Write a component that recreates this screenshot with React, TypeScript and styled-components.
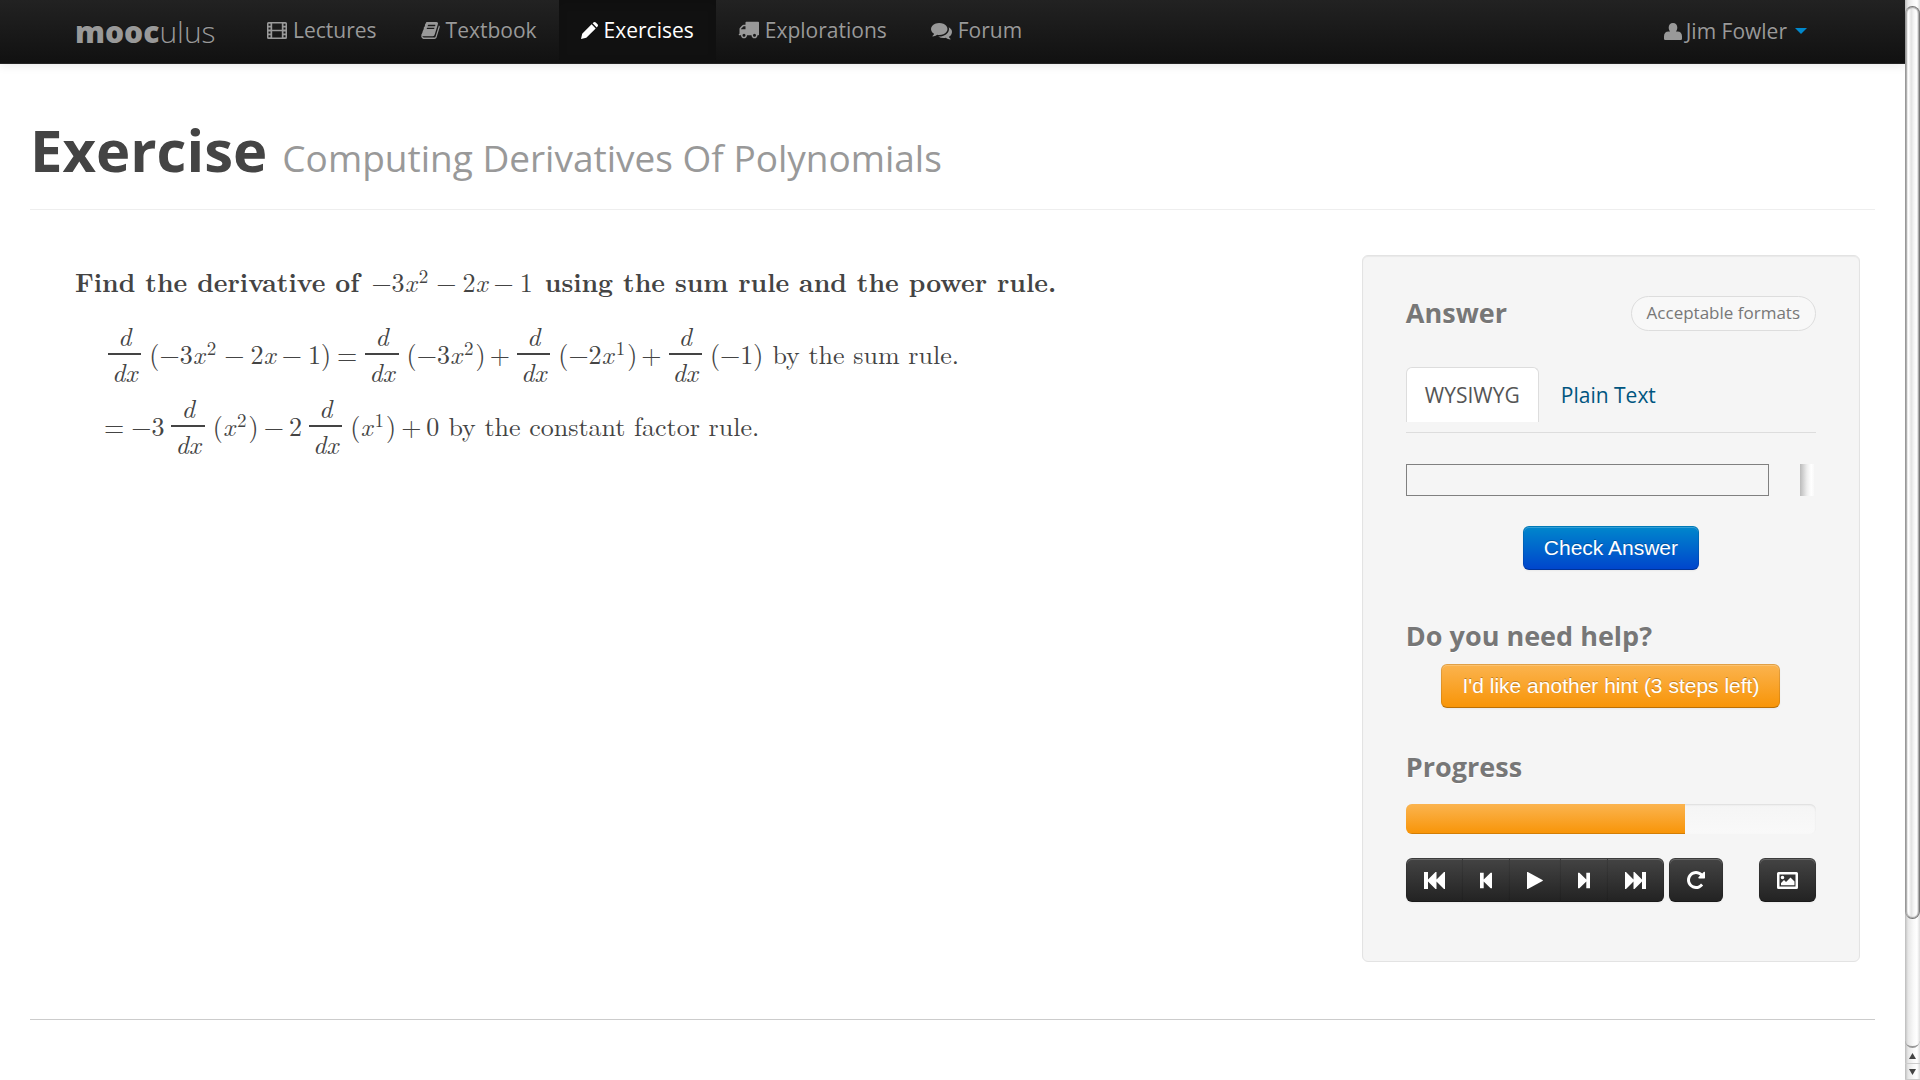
import React from "react";
import styled, { createGlobalStyle, css } from "styled-components";

const SANS = '"Open Sans", "Noto Sans", sans-serif';
const HELV = '"Liberation Sans", Arial, sans-serif';
const ROMAN = '"Latin Modern Roman", "Liberation Serif", serif';

const GlobalStyle = createGlobalStyle`
  * { box-sizing: border-box; }
  body {
    margin: 0;
    background: #fff;
    color: #444;
    font: 21px/30px ${SANS};
  }
  a { text-decoration: none; }
  h1, h2, p { margin: 0; }
`;

const Shell = styled.div`
  display: flex;
  height: 100vh;
  overflow: hidden;
`;

const Page = styled.div`
  flex: 1;
  min-width: 0;
`;

/* ---------- navigation bar ---------- */

const NavBar = styled.header`
  display: flex;
  align-items: flex-start;
  height: 64px;
  padding: 0 98px 0 75px;
  background: linear-gradient(#222, #111);
  border-bottom: 1px solid #252525;
  box-shadow: 0 1px 10px rgba(0, 0, 0, 0.1);
  text-shadow: 0 -1px 0 rgba(0, 0, 0, 0.25);
`;

const Brand = styled.a`
  width: 170px;
  padding-top: 12px;
  font-size: 30px;
  line-height: 40px;
  font-weight: 300;
  color: #999;

  b { font-weight: 800; }
`;

const NavLinks = styled.nav`
  display: flex;
  flex: 1;
`;

const NavLink = styled.a<{ $active?: boolean }>`
  display: flex;
  align-items: center;
  gap: 6px;
  height: 60px;
  padding: 0 22px;
  color: #999;
  ${(p) =>
    p.$active &&
    css`
      color: #fff;
      background: #111;
      box-shadow: inset 0 3px 8px rgba(0, 0, 0, 0.125);
    `}
`;

const UserMenu = styled.button`
  display: flex;
  align-items: center;
  gap: 4px;
  height: 62px;
  padding: 0;
  border: 0;
  background: none;
  color: #999;
  font: inherit;
  text-shadow: inherit;
`;

const Caret = styled.i`
  margin-left: 4px;
  border: 6px solid transparent;
  border-top-color: #08c;
  border-bottom: 0;
`;

/* ---------- page body ---------- */

const Container = styled.div`
  padding: 0 30px;
`;

const PageHeader = styled.div`
  padding: 50px 0 15px;
  margin-bottom: 45px;
  border-bottom: 1px solid #eee;
`;

const Title = styled.h1`
  font-size: 58px;
  line-height: 72px;
  font-weight: 700;

  small {
    font-size: 37px;
    font-weight: 400;
    color: #999;
  }
`;

const Columns = styled.div`
  display: flex;
  align-items: flex-start;
`;

const Problem = styled.main`
  flex: 1;
  padding: 9px 0 0 45px;
  font: 26px/36px ${ROMAN};
`;

const Line = styled.p<{ $indent?: boolean; $bold?: boolean }>`
  display: flex;
  align-items: center;
  ${(p) =>
    p.$indent
      ? css`
          height: 72px;
          padding-left: 29px;
        `
      : css`
          margin-bottom: 18px;
        `}
  font-weight: ${(p) => (p.$bold ? 700 : 400)};
`;

const MathText = styled.span<{ $spaced?: boolean }>`
  margin: 0 ${(p) => (p.$spaced ? 12 : 0)}px;
  font-weight: 400;
  white-space: nowrap;

  sup {
    margin: 0 2px;
    font-size: 19px;
    line-height: 0;
    vertical-align: 9px;
  }
`;

const Reason = styled.span`
  margin-left: 9px;
`;

const Op = styled.span<{ $gap: number; $after?: number }>`
  margin: 0 ${(p) => p.$after ?? p.$gap}px 0 ${(p) => p.$gap}px;
`;

const FractionBox = styled.span`
  display: inline-flex;
  flex-direction: column;
  margin: 0 8px 0 4px;
  text-align: center;
  line-height: 34px;
  font-style: italic;

  span + span { border-top: 2px solid #444; }
  span { padding: 0 4px; }
`;

/* ---------- answer panel ---------- */

const Well = styled.aside`
  flex: 0 0 27%;
  min-width: 480px;
  margin-right: 15px;
  padding: 39px 43px 59px;
  background: #f5f5f5;
  border: 1px solid #e3e3e3;
  border-radius: 6px;
  box-shadow: inset 0 1px 1px rgba(0, 0, 0, 0.05);
`;

const WellHead = styled.div`
  display: flex;
  align-items: center;
  justify-content: space-between;
  height: 36px;
  margin-bottom: 36px;
`;

const Heading = styled.h2`
  font-size: 27px;
  line-height: 36px;
  font-weight: 700;
  color: #777;
  text-shadow: 0 1px 0 #fff;
`;

const Pill = styled.button`
  height: 35px;
  padding: 0 15px;
  border: 1px solid #ddd;
  border-radius: 18px;
  background: #f8f8f8;
  color: #777;
  font: 17px/32px ${SANS};
`;

const Tabs = styled.div`
  display: flex;
  padding-bottom: 10px;
  margin-bottom: 31px;
  border-bottom: 1px solid #ddd;
`;

const Tab = styled.a<{ $active?: boolean }>`
  height: 55px;
  margin-right: 3px;
  padding: 12px 18px;
  border: 1px solid transparent;
  border-bottom: 0;
  border-radius: 6px 6px 0 0;
  color: #005580;
  ${(p) =>
    p.$active &&
    css`
      color: #555;
      background: #fff;
      border-color: #ddd;
    `}
`;

const FieldRow = styled.div`
  display: flex;
  justify-content: space-between;
  padding-right: 2px;
  margin-bottom: 30px;
`;

const MathField = styled.input`
  flex: 1;
  min-width: 0;
  height: 32px;
  margin-right: 31px;
  border: 1px solid #808080;
  background: transparent;
  font: 21px ${ROMAN};
`;

const FieldEdge = styled.span`
  width: 14px;
  height: 32px;
  background: linear-gradient(90deg, #bbb, #eee 50%, #fff 80%, #f8f8f8);
`;

const Center = styled.div<{ $above?: number; $below: number }>`
  display: flex;
  justify-content: center;
  margin: ${(p) => p.$above ?? 0}px 0 ${(p) => p.$below}px;
`;

const buttonBase = css`
  height: 44px;
  color: #fff;
  border: 1px solid;
  border-color: rgba(0, 0, 0, 0.1) rgba(0, 0, 0, 0.1) rgba(0, 0, 0, 0.25);
  background-origin: border-box;
  box-shadow: inset 0 1px 0 rgba(255, 255, 255, 0.2), 0 1px 2px rgba(0, 0, 0, 0.05);
`;

const Button = styled.button<{ $tone: "primary" | "warning" }>`
  ${buttonBase}
  padding: 0 20px;
  border-radius: 6px;
  font: 21px/30px ${HELV};
  text-shadow: 0 -1px 0 rgba(0, 0, 0, 0.25);
  background-image: ${(p) =>
    p.$tone === "primary" ? "linear-gradient(#08c, #04c)" : "linear-gradient(#fbb450, #f89406)"};
`;

const Track = styled.div`
  height: 30px;
  margin: 19px 0 24px;
  border-radius: 6px;
  overflow: hidden;
  background: linear-gradient(#f5f5f5, #f9f9f9);
  box-shadow: inset 0 1px 2px rgba(0, 0, 0, 0.1);
`;

const Fill = styled.div`
  height: 100%;
  background: linear-gradient(#fbb450, #f89406);
  box-shadow: inset 0 -1px 0 rgba(0, 0, 0, 0.15);
`;

const Player = styled.div`
  display: flex;
  gap: 5px;
`;

const Group = styled.div`
  display: flex;

  button { border-radius: 0; border-right-width: 0; }
  button:first-child { border-radius: 6px 0 0 6px; }
  button:last-child { border-radius: 0 6px 6px 0; border-right-width: 1px; }
`;

const DarkButton = styled.button<{ $right?: boolean }>`
  ${buttonBase}
  display: flex;
  align-items: center;
  padding: 0 17px;
  border-radius: 6px;
  background-image: linear-gradient(#444, #222);
  ${(p) => p.$right && css`margin-left: auto;`}
`;

const Rule = styled.hr`
  margin: 57px 0 0;
  border: 0;
  border-top: 1px solid #ccc;
`;

/* ---------- window scroll bar ---------- */

const ScrollBar = styled.div`
  display: flex;
  flex-direction: column;
  width: 15px;
  padding-top: 6px;
  background: linear-gradient(90deg, #bbb, #e6e6e6 20%, #fafafa 60%, #fff 80%, #ddd);
`;

const Thumb = styled.div`
  flex: 0 0 85%;
  border: 1px solid #777;
  border-left-color: #999;
  border-radius: 8px;
  background: linear-gradient(90deg, #ddd, #fff 20%, #e2e2e2 40%, #f4f4f4 60%, #fff 80%, #ccc);
  box-shadow: inset 0 0 1px 1px #aaa;
`;

const TrackEnd = styled.div`
  flex: 1;
  border-bottom: 2px solid #999;
  border-radius: 0 0 8px 8px;
`;

const Arrow = styled.div`
  display: flex;
  align-items: center;
  justify-content: center;
  height: 16px;
  border-bottom: 1px solid #ccc;
`;

/* ---------- icons ---------- */

type IconProps = { w: number; h: number; box?: string; d: string };

const Icon = ({ w, h, box, d }: IconProps) => (
  <svg width={w} height={h} viewBox={box ?? `0 0 ${w} ${h}`} fill="currentColor" aria-hidden="true">
    <path fillRule="evenodd" d={d} />
  </svg>
);

const FILM =
  "M1.5 0h17A1.5 1.5 0 0 1 20 1.5v14a1.5 1.5 0 0 1-1.5 1.5h-17A1.5 1.5 0 0 1 0 15.5v-14A1.5 1.5 0 0 1 1.5 0zM1.5 1.7v2h2v-2zM1.5 5.5v2h2v-2zM1.5 9.4v2h2v-2zM1.5 13.2v2h2v-2zM16.5 1.7v2h2v-2zM16.5 5.5v2h2v-2zM16.5 9.4v2h2v-2zM16.5 13.2v2h2v-2zM5.2 1.5v6.2h9.6V1.5zM5.2 9.3v6.2h9.6V9.3z";
const BOOK =
  "M1703 478q40 57 18 129l-275 906q-19 64-76.5 107.5t-122.5 43.5h-923q-77 0-148.5-53.5t-99.5-131.5q-24-67-2-127 0-4 3-27t4-37q1-8-3-21.5t-3-19.5q2-11 8-21t16.5-23.5 16.5-23.5q23-38 45-91.5t30-91.5q3-10 .5-30t-.5-28q3-11 17-28t17-23q21-36 42-92t25-90q1-9-2.5-32t.5-28q4-13 22-30.5t22-22.5q19-26 42.5-84.5t27.5-96.5q1-8-3-25.5t-2-26.5q2-8 9-18t18-23 17-21q8-12 16.5-30.5t15-35 16-36 19.5-32 26.5-23.5 36-11.5 47.5 5.5l-1 3q38-9 51-9h761q74 0 114 56t18 130l-274 906q-36 119-71.5 153.5t-128.5 34.5h-869q-27 0-38 15-11 16-1 43 24 70 144 70h923q29 0 56-15.5t35-41.5l300-987q7-22 5-57 38 15 59 43zm-1064 2q-4 13 2 22.5t20 9.5h608q13 0 25.5-9.5t16.5-22.5l21-64q4-13-2-22.5t-20-9.5h-608q-13 0-25.5 9.5t-16.5 22.5zm-83 256q-4 13 2 22.5t20 9.5h608q13 0 25.5-9.5t16.5-22.5l21-64q4-13-2-22.5t-20-9.5h-608q-13 0-25.5 9.5t-16.5 22.5z";
const PENCIL = "M0 17l1.2-5.3L10.6 2.3l4.1 4.1-9.4 9.4zM11.6 1.3l.8-.8q1.2-1 2.4 0l1.7 1.7q1 1.2 0 2.4l-.8.8z";
const TRUCK =
  "M640 1408q0-52-38-90t-90-38-90 38-38 90 38 90 90 38 90-38 38-90zm-384-512h384v-256h-158q-13 0-22 9l-195 195q-9 9-9 22v30zm1280 512q0-52-38-90t-90-38-90 38-38 90 38 90 90 38 90-38 38-90zm256-1088v1024q0 15-4 26.5t-13.5 18.5-16.5 11.5-23.5 6-22.5 2-25.5 0-22.5-.5q0 106-75 181t-181 75-181-75-75-181h-384q0 106-75 181t-181 75-181-75-75-181h-64q-3 0-22.5.5t-25.5 0-22.5-2-23.5-6-16.5-11.5-13.5-18.5-4-26.5q0-26 19-45t45-19v-320q0-8-.5-35t0-38 2.5-34.5 6.5-37 14-30.5 22.5-30l198-198q19-19 50.5-32t58.5-13h160v-192q0-26 19-45t45-19h1024q26 0 45 19t19 45z";
const COMMENTS =
  "M1408 768q0 139-94 257t-256.5 186.5-353.5 68.5q-86 0-176-16-124 88-278 128-36 9-86 16h-3q-11 0-20.5-8t-11.5-21q-1-3-1-6.5t.5-6.5 2-6l2.5-5 3.5-5.5 4-5 4.5-5 4-4.5q5-6 23-25t26-29.5 22.5-29 25-38.5 20.5-44q-124-72-195-177t-71-224q0-139 94-257t256.5-186.5 353.5-68.5 353.5 68.5 256.5 186.5 94 257zm384 256q0 120-71 224.5t-195 176.5q10 24 20.5 44t25 38.5 22.5 29 26 29.5 23 25q1 1 4 4.5t4.5 5 4 5 3.5 5.5l2.5 5 2 6 .5 6.5-1 6.5q-3 14-13 22t-22 7q-50-7-86-16-154-40-278-128-90 16-176 16-271 0-472-132 58 4 88 4 161 0 309-45t264-129q125-92 192-212t67-254q0-77-23-152 129 71 204 178t75 230z";
const USER =
  "M9 0c2.7 0 4.3 1.9 4.3 4.6 0 1.7-.6 3-1.4 4h1.6C16.3 8.6 18 10.5 18 13.2V15.8q0 1.2-1.2 1.2H1.2Q0 17 0 15.8V13.2C0 10.5 1.7 8.6 4.5 8.6h1.6c-.8-1-1.4-2.3-1.4-4C4.7 1.9 6.3 0 9 0z";
const FAST_BACK = "M0 0h4v7.5L11.5 0h1v7.5L20 0h1v17h-1L12.5 9.5V17h-1L4 9.5V17H0z";
const STEP_BACK = "M0 0h4v7.5L11.5 0h1.5v17h-1.5L4 9.5V17H0z";
const PLAY = "M0 .4Q0-.3.8.1L15.5 8q.8.5 0 1L.8 16.9Q0 17.3 0 16.6z";
const STEP_FWD = "M13 0H9v7.5L1.5 0H0v17h1.5L9 9.5V17h4z";
const FAST_FWD = "M21 0h-4v7.5L9.5 0h-1v7.5L1 0H0v17h1l7.500-7.500V17h1L17 9.500V17h4z";
const REPEAT =
  "M1664 256v448q0 26-19 45t-45 19h-448q-42 0-59-40-17-39 14-69l138-138q-148-137-349-137-104 0-198.5 40.5t-163.5 109.5-109.5 163.5-40.5 198.5 40.5 198.5 109.5 163.5 163.5 109.5 198.5 40.5q119 0 225-52t179-147q7-10 23-12 15 0 25 9l137 138q9 8 9.5 20.5t-7.5 22.5q-109 132-264 204.5t-327 72.5q-156 0-298-61t-245-164-164-245-61-298 61-298 164-245 245-164 298-61q147 0 284.5 55.5t244.5 156.5l130-129q29-31 70-14 39 17 39 59z";
const PICTURE =
  "M1.5 0h18A1.5 1.5 0 0 1 21 1.5v14a1.5 1.5 0 0 1-1.5 1.5h-18A1.5 1.5 0 0 1 0 15.5v-14A1.5 1.5 0 0 1 1.5 0zM2.5 2.5v12h16v-12zM5.5 3.7a1.8 1.8 0 1 1 0 3.6 1.8 1.8 0 0 1 0-3.6zM4 13.3v-2.3l3-3 2 2 4.5-4.5L17.5 9.5v3.8z";

const Fraction = () => (
  <FractionBox>
    <span>d</span>
    <span>dx</span>
  </FractionBox>
);

const X = ({ power }: { power?: number }) => (
  <>
    <i>x</i>
    {power && <sup>{power}</sup>}
  </>
);

const Polynomial = () => (
  <>
    −3<X power={2} /><Op $gap={6}>−</Op>2<X /><Op $gap={6}>−</Op>1
  </>
);

const navItems = [
  { label: "Lectures", icon: <Icon w={20} h={17} d={FILM} /> },
  { label: "Textbook", icon: <Icon w={19} h={21} box="40 0 1710 1792" d={BOOK} /> },
  { label: "Exercises", icon: <Icon w={17} h={17} d={PENCIL} />, active: true },
  { label: "Explorations", icon: <Icon w={21} h={21} box="0 100 1792 1792" d={TRUCK} /> },
  { label: "Forum", icon: <Icon w={21} h={21} box="0 0 1792 1792" d={COMMENTS} /> },
];

const transport = [
  { label: "First step", w: 21, d: FAST_BACK },
  { label: "Previous step", w: 12, box: "0 0 13 17", d: STEP_BACK },
  { label: "Play", w: 16, d: PLAY },
  { label: "Next step", w: 12, box: "0 0 13 17", d: STEP_FWD },
  { label: "Last step", w: 21, d: FAST_FWD },
];

const progress = 68;

export default function App() {
  return (
    <Shell>
      <GlobalStyle />
      <Page>
        <NavBar>
          <Brand href="#home"><b>mooc</b>ulus</Brand>
          <NavLinks>
            {navItems.map((n) => (
              <NavLink key={n.label} href={`#${n.label}`} $active={n.active}>
                {n.icon}
                {n.label}
              </NavLink>
            ))}
          </NavLinks>
          <UserMenu>
            <Icon w={18} h={17} d={USER} />
            Jim Fowler
            <Caret />
          </UserMenu>
        </NavBar>

        <Container>
          <PageHeader>
            <Title>
              Exercise <small>Computing Derivatives Of Polynomials</small>
            </Title>
          </PageHeader>

          <Columns>
            <Problem>
              <Line $bold>
                <span>Find the derivative of</span>
                <MathText $spaced><Polynomial /></MathText>
                <span>using the sum rule and the power rule.</span>
              </Line>
              <Line $indent>
                <Fraction />
                <MathText>(<Polynomial />)<Op $gap={6} $after={4}>=</Op></MathText>
                <Fraction />
                <MathText>(−3<X power={2} />)<Op $gap={4} $after={3}>+</Op></MathText>
                <Fraction />
                <MathText>(−2<X power={1} />)<Op $gap={4} $after={3}>+</Op></MathText>
                <Fraction />
                <MathText>(−1)</MathText>
                <Reason>by the sum rule.</Reason>
              </Line>
              <Line $indent>
                <MathText>=<Op $gap={7} $after={3}>−3</Op></MathText>
                <Fraction />
                <MathText>(<X power={2} />)<Op $gap={5}>−</Op><Op $gap={0} $after={3}>2</Op></MathText>
                <Fraction />
                <MathText>(<X power={1} />)<Op $gap={5}>+</Op>0</MathText>
                <Reason>by the constant factor rule.</Reason>
              </Line>
            </Problem>

            <Well>
              <WellHead>
                <Heading>Answer</Heading>
                <Pill>Acceptable formats</Pill>
              </WellHead>
              <Tabs>
                <Tab href="#wysiwyg" $active>WYSIWYG</Tab>
                <Tab href="#plain">Plain Text</Tab>
              </Tabs>
              <FieldRow>
                <MathField type="text" aria-label="Answer" />
                <FieldEdge />
              </FieldRow>
              <Center $below={48}>
                <Button $tone="primary">Check Answer</Button>
              </Center>
              <Heading>Do you need help?</Heading>
              <Center $above={10} $below={41}>
                <Button $tone="warning">I'd like another hint (3 steps left)</Button>
              </Center>
              <Heading>Progress</Heading>
              <Track role="progressbar" aria-label="Progress" aria-valuenow={progress}>
                <Fill style={{ width: `${progress}%` }} />
              </Track>
              <Player>
                <Group>
                  {transport.map((t) => (
                    <DarkButton key={t.label} aria-label={t.label}>
                      <Icon w={t.w} h={17} box={t.box} d={t.d} />
                    </DarkButton>
                  ))}
                </Group>
                <DarkButton aria-label="Start over">
                  <Icon w={18} h={18} box="128 128 1536 1536" d={REPEAT} />
                </DarkButton>
                <DarkButton aria-label="Graph" $right>
                  <Icon w={21} h={17} d={PICTURE} />
                </DarkButton>
              </Player>
            </Well>
          </Columns>
          <Rule />
        </Container>
      </Page>

      <ScrollBar aria-hidden="true">
        <Thumb />
        <TrackEnd />
        <Arrow><svg width="7" height="6" viewBox="0 0 7 6"><path d="M0 6h7L3.5 0z" fill="#444" /></svg></Arrow>
        <Arrow><svg width="7" height="6" viewBox="0 0 7 6"><path d="M0 0h7L3.5 6z" fill="#444" /></svg></Arrow>
      </ScrollBar>
    </Shell>
  );
}
